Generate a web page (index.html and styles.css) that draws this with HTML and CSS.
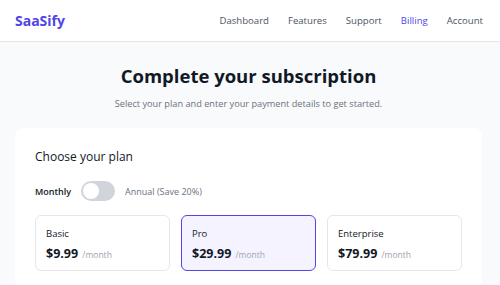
FILE: index.html
```html
<!DOCTYPE html>
<html>
<head>
<meta charset="utf-8">
<link rel="stylesheet" href="styles.css">
</head>
<body>
<header class="nav">
  <div class="logo">SaaSify</div>
  <nav class="links">
    <a>Dashboard</a>
    <a>Features</a>
    <a>Support</a>
    <a class="active">Billing</a>
    <a>Account</a>
  </nav>
</header>
<main class="main">
  <h1 class="title">Complete your subscription</h1>
  <p class="subtitle">Select your plan and enter your payment details to get started.</p>
  <section class="card">
    <h2 class="card-title">Choose your plan</h2>
    <div class="toggle-row">
      <span class="mon">Monthly</span>
      <span class="toggle"><span class="knob"></span></span>
      <span class="ann">Annual (Save 20%)</span>
    </div>
    <div class="plans">
      <div class="plan">
        <div class="plan-name">Basic</div>
        <div class="price"><b>$9.99</b> <span>/month</span></div>
      </div>
      <div class="plan selected">
        <div class="plan-name">Pro</div>
        <div class="price"><b>$29.99</b> <span>/month</span></div>
      </div>
      <div class="plan">
        <div class="plan-name">Enterprise</div>
        <div class="price"><b>$79.99</b> <span>/month</span></div>
      </div>
    </div>
  </section>
</main>
</body>
</html>
```

FILE: styles.css
```css
* { box-sizing: border-box; }
html, body { margin: 0; padding: 0; }
body {
  font-family: "Open Sans", "Noto Sans", sans-serif;
  background: #f9fafb;
  color: #111827;
  width: 500px;
  height: 285px;
  overflow: hidden;
}
.nav {
  height: 42px;
  background: #fff;
  border-bottom: 1px solid #e5e7eb;
  display: flex;
  align-items: center;
  justify-content: space-between;
  padding: 0 17px 0 15px;
}
.logo {
  font-weight: 700;
  font-size: 14px;
  color: #4f46e5;
}
.links {
  display: flex;
  gap: 19px;
  font-size: 9.6px;
}
.links a { color: #4b5563; }
.links a.active { color: #4f46e5; }
.main {
  padding: 22px 18px 0 15px;
}
.title {
  margin: 0;
  text-align: center;
  font-size: 18.5px;
  font-weight: 700;
  line-height: 24px;
  color: #111827;
}
.subtitle {
  margin: 10px 0 0;
  text-align: center;
  font-size: 9.2px;
  color: #6b7280;
  line-height: 12px;
}
.card {
  margin-top: 18px;
  background: #fff;
  border-radius: 8px;
  padding: 21px 20px 20px 20px;
  height: 160px;
}
.card-title {
  margin: 0;
  font-size: 12px;
  font-weight: 400;
  line-height: 16px;
  color: #111827;
}
.toggle-row {
  margin-top: 16px;
  display: flex;
  align-items: center;
  gap: 10px;
  font-size: 9px;
}
.mon { font-weight: 600; color: #111827; }
.ann { color: #6b7280; }
.toggle {
  width: 34px;
  height: 20px;
  border-radius: 10px;
  background: #d1d5db;
  padding: 2px;
  display: flex;
}
.knob {
  width: 16px;
  height: 16px;
  border-radius: 50%;
  background: #fff;
}
.plans {
  margin-top: 14px;
  display: flex;
  gap: 11px;
}
.plan {
  flex: 1;
  height: 56px;
  border: 1px solid #e5e7eb;
  border-radius: 6px;
  padding: 11px 10px;
}
.plan.selected {
  border-color: #4f46e5;
  background: #f5f3ff;
}
.plan-name {
  font-size: 9.5px;
  line-height: 13px;
  color: #111827;
}
.price {
  margin-top: 3px;
  line-height: 18px;
}
.price b { font-size: 12.5px; font-weight: 700; }
.price span { font-size: 8.5px; color: #9ca3af; }
```
